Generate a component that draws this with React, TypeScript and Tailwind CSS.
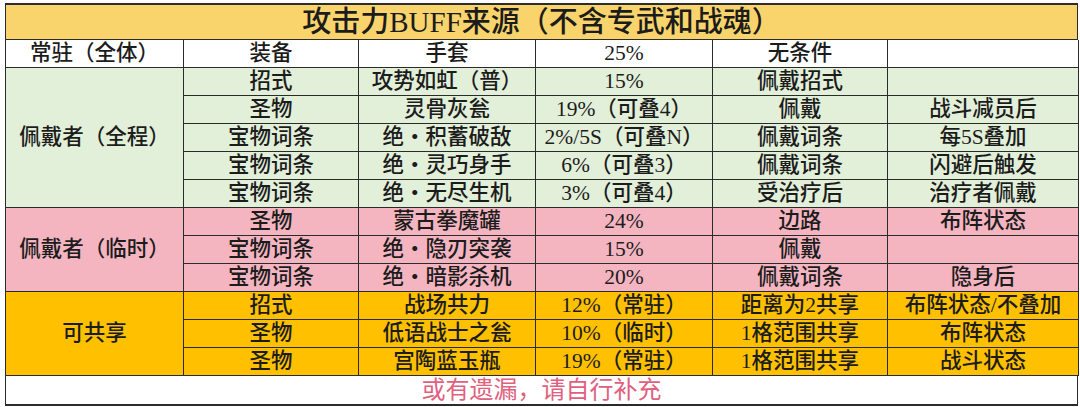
import React from "react";

type Row = [string, string, string, string, string];

const green: Row[] = [
  ["招式", "攻势如虹（普）", "15%", "佩戴招式", ""],
  ["圣物", "灵骨灰瓮", "19%（可叠4）", "佩戴", "战斗减员后"],
  ["宝物词条", "绝・积蓄破敌", "2%/5S（可叠N）", "佩戴词条", "每5S叠加"],
  ["宝物词条", "绝・灵巧身手", "6%（可叠3）", "佩戴词条", "闪避后触发"],
  ["宝物词条", "绝・无尽生机", "3%（可叠4）", "受治疗后", "治疗者佩戴"],
];
const pink: Row[] = [
  ["圣物", "蒙古拳魔罐", "24%", "边路", "布阵状态"],
  ["宝物词条", "绝・隐刃突袭", "15%", "佩戴", ""],
  ["宝物词条", "绝・暗影杀机", "20%", "佩戴词条", "隐身后"],
];
const orange: Row[] = [
  ["招式", "战场共力", "12%（常驻）", "距离为2共享", "布阵状态/不叠加"],
  ["圣物", "低语战士之瓮", "10%（临时）", "1格范围共享", "布阵状态"],
  ["圣物", "宫陶蓝玉瓶", "19%（常驻）", "1格范围共享", "战斗状态"],
];

const cell = "flex items-center justify-center border-r border-b border-[#2b2b2b] whitespace-nowrap overflow-hidden";

function Group({ label, rows, bg }: { label: string; rows: Row[]; bg: string }) {
  return (
    <>
      <div
        className={`${cell} ${bg}`}
        style={{ gridRow: `span ${rows.length} / span ${rows.length}` }}
      >
        {label}
      </div>
      {rows.map((r, i) =>
        r.map((c, j) => (
          <div key={`${i}-${j}`} className={`${cell} ${bg}`}>
            {c}
          </div>
        ))
      )}
    </>
  );
}

export default function App() {
  return (
    <div className="w-[1080px] h-[407px] bg-white overflow-hidden pt-[3px] pl-[5px]">
      <div
        className="w-[1073px] border-l border-t-2 border-[#2b2b2b] text-[21.5px] leading-none text-[#1c1c1c] font-medium"
        style={{ fontFamily: '"Liberation Serif", "Noto Sans CJK SC", serif' }}
      >
        <div className="h-[35px] flex items-center justify-center bg-[#f9d46c] border-r border-b border-[#2b2b2b] text-[29px]">
          攻击力BUFF来源（不含专武和战魂）
        </div>
        <div className="grid grid-cols-[178px_175px_177px_177px_175px_191px] auto-rows-[28px]">
          <div className={`${cell} bg-white`}>常驻（全体）</div>
          <div className={`${cell} bg-white`}>装备</div>
          <div className={`${cell} bg-white`}>手套</div>
          <div className={`${cell} bg-white`}>25%</div>
          <div className={`${cell} bg-white`}>无条件</div>
          <div className={`${cell} bg-white`}></div>
          <Group label="佩戴者（全程）" rows={green} bg="bg-[#e2efd9]" />
          <Group label="佩戴者（临时）" rows={pink} bg="bg-[#f4b5c1]" />
          <Group label="可共享" rows={orange} bg="bg-[#ffc000]" />
        </div>
        <div className="h-[30px] flex items-center justify-center bg-white border-r border-b-2 border-[#2b2b2b] text-[#e0607e] font-normal text-[24px]">
          或有遗漏，请自行补充
        </div>
      </div>
    </div>
  );
}
